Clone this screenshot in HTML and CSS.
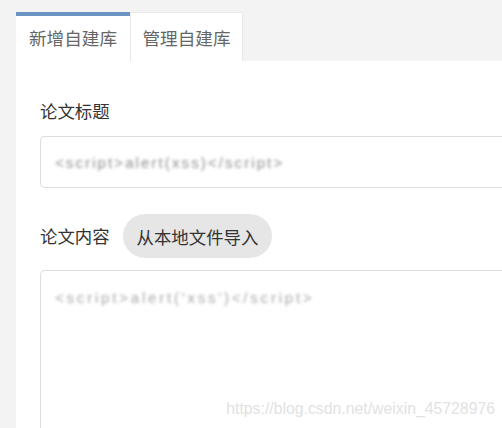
FILE: index.html
```html
<!DOCTYPE html>
<html lang="zh-CN">
<head>
    <meta charset="UTF-8">
    <title>自建库</title>
    <link rel="stylesheet" href="styles.css">
</head>
<body>
    <main class="page">
        <nav class="tabs">
            <div class="tab active">新增自建库</div>
            <div class="tab">管理自建库</div>
        </nav>

        <section class="panel">
            <div class="field">
                <label class="label">论文标题</label>
                <div class="input"><span class="blur">&lt;script&gt;alert(xss)&lt;/script&gt;</span></div>
            </div>

            <div class="field">
                <div class="label-row">
                    <label class="label">论文内容</label>
                    <button class="import-btn" type="button">从本地文件导入</button>
                </div>
                <div class="textarea"><span class="blur light">&lt;script&gt;alert('xss')&lt;/script&gt;</span></div>
            </div>
        </section>
    </main>
    <div class="watermark">https://blog.csdn.net/weixin_45728976</div>
</body>
</html>
```

FILE: styles.css
```css
/* General styles */
body {
    margin: 0;
    height: 428px;
    overflow: hidden;
    background-color: #f3f3f3;
    font-family: "Noto Sans CJK SC", "Noto Sans", sans-serif;
    color: #333;
}

.page {
    padding: 12px 0 0 16px;
}

/* Tabs */
.tabs {
    display: flex;
}

.tab {
    width: 113px;
    height: 49px;
    box-sizing: border-box;
    display: flex;
    align-items: center;
    justify-content: center;
    font-size: 17.6px;
    color: #666;
    background: #fff;
    border: 1px solid #e9e9e9;
    border-bottom: none;
}

.tab.active {
    border: none;
    border-top: 4px solid #6a92c2;
    padding-bottom: 2px;
    width: 114px;
}

/* Panel */
.panel {
    background: #fff;
    padding: 38px 0 0 24px;
    height: 329px;
    overflow: hidden;
}

.field {
    margin-bottom: 26px;
}

.label {
    display: block;
    font-size: 17.4px;
    color: #333;
    line-height: 24px;
    margin-bottom: 13px;
}

.label-row {
    display: flex;
    align-items: center;
    gap: 13px;
    margin-bottom: 12px;
}

.label-row .label {
    margin-bottom: 0;
}

.import-btn {
    font-family: inherit;
    font-size: 17.4px;
    color: #333;
    background: #e6e6e6;
    border: none;
    border-radius: 22px;
    height: 44px;
    padding: 0 14px;
}

.input,
.textarea {
    border: 1px solid #ddd;
    border-right: none;
    border-radius: 5px 0 0 5px;
    height: 52px;
    box-sizing: border-box;
    padding: 0 0 0 14px;
    display: flex;
    align-items: center;
}

.textarea {
    height: 200px;
    align-items: flex-start;
    padding-top: 18px;
}

.blur {
    font-family: "Liberation Sans", sans-serif;
    font-size: 15px;
    letter-spacing: 2.1px;
    color: #8e8e8e;
    filter: blur(1.4px);
}

.blur.light {
    color: #a8a8a8;
    letter-spacing: 2.8px;
}

.watermark {
    position: absolute;
    right: 7px;
    bottom: 10px;
    font-family: "Liberation Sans", sans-serif;
    font-size: 15.8px;
    color: #e2e2e2;
}
```
